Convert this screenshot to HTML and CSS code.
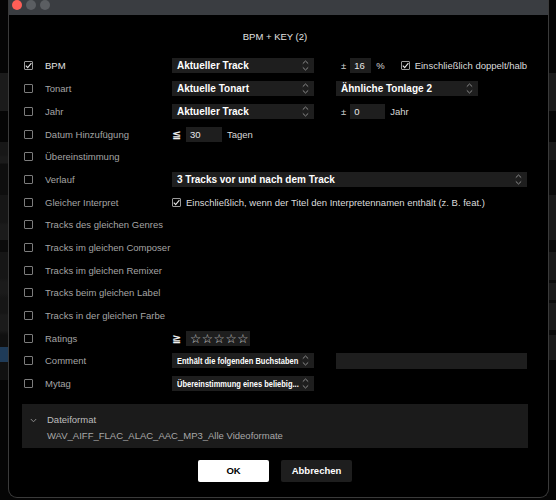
FILE: index.html
```html
<!DOCTYPE html>
<html lang="de">
<head>
    <meta charset="UTF-8">
    <meta name="viewport" content="width=device-width, initial-scale=1.0">
    <title>BPM + KEY (2)</title>
    <link rel="stylesheet" href="styles.css">
</head>
<body>
    <svg class="defs" width="0" height="0">
        <symbol id="updown" viewBox="0 0 7 11">
            <path d="M0.8 3.6 L3.5 1 L6.2 3.6 M0.8 7.4 L3.5 10 L6.2 7.4" fill="none" stroke="#8d8d8d" stroke-width="1"/>
        </symbol>
        <symbol id="tick" viewBox="0 0 9 9">
            <path d="M1.8 4.6 L3.7 6.6 L7.4 2.2" fill="none" stroke="#e6e6e6" stroke-width="1.1"/>
        </symbol>
    </svg>

    <div class="side side-left"></div>

    <div class="window">
        <div class="titlebar">
            <span class="light red"></span>
            <span class="light"></span>
            <span class="light"></span>
        </div>

        <div class="dialog-title">BPM + KEY (2)</div>

        <div class="rows">
            <div class="row">
                <span class="check on"><svg><use href="#tick"/></svg></span>
                <span class="label active">BPM</span>
                <div class="controls">
                    <div class="select"><span>Aktueller Track</span><svg class="ud"><use href="#updown"/></svg></div>
                    <span class="pm">±</span>
                    <span class="field narrow">16</span>
                    <span class="unit">%</span>
                    <span class="check on inline-check"><svg><use href="#tick"/></svg></span>
                    <span class="opt">Einschließlich doppelt/halb</span>
                </div>
            </div>
            <div class="row">
                <span class="check"></span>
                <span class="label">Tonart</span>
                <div class="controls">
                    <div class="select"><span>Aktuelle Tonart</span><svg class="ud"><use href="#updown"/></svg></div>
                    <div class="select"><span>Ähnliche Tonlage 2</span><svg class="ud"><use href="#updown"/></svg></div>
                </div>
            </div>
            <div class="row">
                <span class="check"></span>
                <span class="label">Jahr</span>
                <div class="controls">
                    <div class="select"><span>Aktueller Track</span><svg class="ud"><use href="#updown"/></svg></div>
                    <span class="pm">±</span>
                    <span class="field wide">0</span>
                    <span class="unit">Jahr</span>
                </div>
            </div>
            <div class="row">
                <span class="check"></span>
                <span class="label">Datum Hinzufügung</span>
                <div class="controls">
                    <span class="cmp">≦</span>
                    <span class="field days">30</span>
                    <span class="unit">Tagen</span>
                </div>
            </div>
            <div class="row">
                <span class="check"></span>
                <span class="label">Übereinstimmung</span>
            </div>
            <div class="row">
                <span class="check"></span>
                <span class="label">Verlauf</span>
                <div class="controls">
                    <div class="select full"><span>3 Tracks vor und nach dem Track</span><svg class="ud"><use href="#updown"/></svg></div>
                </div>
            </div>
            <div class="row">
                <span class="check"></span>
                <span class="label">Gleicher Interpret</span>
                <div class="controls">
                    <span class="check on"><svg><use href="#tick"/></svg></span>
                    <span class="opt">Einschließlich, wenn der Titel den Interpretennamen enthält (z. B. feat.)</span>
                </div>
            </div>
            <div class="row">
                <span class="check"></span>
                <span class="label">Tracks des gleichen Genres</span>
            </div>
            <div class="row">
                <span class="check"></span>
                <span class="label">Tracks im gleichen Composer</span>
            </div>
            <div class="row">
                <span class="check"></span>
                <span class="label">Tracks im gleichen Remixer</span>
            </div>
            <div class="row">
                <span class="check"></span>
                <span class="label">Tracks beim gleichen Label</span>
            </div>
            <div class="row">
                <span class="check"></span>
                <span class="label">Tracks in der gleichen Farbe</span>
            </div>
            <div class="row">
                <span class="check"></span>
                <span class="label">Ratings</span>
                <div class="controls">
                    <span class="cmp">≧</span>
                    <span class="stars">☆☆☆☆☆</span>
                </div>
            </div>
            <div class="row">
                <span class="check"></span>
                <span class="label">Comment</span>
                <div class="controls">
                    <div class="select"><span class="squeeze">Enthält die folgenden Buchstaben</span><svg class="ud"><use href="#updown"/></svg></div>
                    <span class="text-input"></span>
                </div>
            </div>
            <div class="row">
                <span class="check"></span>
                <span class="label">Mytag</span>
                <div class="controls">
                    <div class="select"><span class="squeeze">Übereinstimmung eines beliebig...</span><svg class="ud"><use href="#updown"/></svg></div>
                </div>
            </div>
        </div>

        <div class="format-panel">
            <svg class="fold" viewBox="0 0 7 5"><path d="M0.8 1 L3.5 3.8 L6.2 1" fill="none" stroke="#8a8a8a" stroke-width="1"/></svg>
            <span class="format-title">Dateiformat</span>
            <span></span>
            <span class="format-list">WAV_AIFF_FLAC_ALAC_AAC_MP3_Alle Videoformate</span>
        </div>

        <div class="buttons">
            <button class="btn primary">OK</button>
            <button class="btn">Abbrechen</button>
        </div>
    </div>

    <div class="side side-right"></div>
</body>
</html>
```

FILE: styles.css
```css
* {
    box-sizing: border-box;
}
html, body {
    margin: 0;
    height: 100%;
}
body {
    display: flex;
    overflow: hidden;
    background: #050505;
    font-family: "Liberation Sans", Arial, sans-serif;
    font-size: 9.5px;
    color: #a5a5a5;
}
.defs {
    position: absolute;
    width: 0;
    height: 0;
}

/* app behind the dialog */
.side {
    flex: none;
    width: 8px;
    background: linear-gradient(180deg,
        #050505 0 73px, #1b1b1b 73px 111px, #050505 111px 142px,
        #171717 142px 155px, #1b1b1b 157px 163px, #0e0e0e 164px 195px,
        #161616 195px 222px, #1b1b1b 225px 240px, #0b0b0b 240px 252px,
        #161616 252px 278px, #1b1b1b 282px 293px, #161616 298px 313px,
        #1b1b1b 315px 330px, #101010 335px 347px, #1f3b58 347px 362px,
        #111 362px 380px, #050505 380px);
}
.side-right {
    width: 7px;
    background: linear-gradient(180deg,
        #050505 0 73px, #1a1a1a 73px 111px, #050505 111px 142px,
        #1a1a1a 142px 160px, #0b0b0b 160px 195px, #1a1a1a 195px 240px,
        #0b0b0b 240px 252px, #1a1a1a 252px 280px, #0b0b0b 280px 283px,
        #1a1a1a 283px 300px, #0b0b0b 300px 303px, #1a1a1a 303px 330px,
        #0b0b0b 330px 335px, #1a1a1a 335px 360px, #050505 360px);
}

/* dialog window */
.window {
    flex: none;
    width: 541px;
    height: 498px;
    display: flex;
    flex-direction: column;
    background: #000;
    border: 1px solid #3a3a3a;
    border-top: none;
    border-radius: 0 0 9px 9px;
}
.titlebar {
    height: 15px;
    display: flex;
    gap: 4px;
    padding-left: 3px;
    background: #3a3d41;
}
.light {
    width: 10px;
    height: 10px;
    border-radius: 50%;
    background: #5b5e62;
}
.light.red {
    background: #fe5f57;
}
.dialog-title {
    padding: 15px 7px 10.65px 0;
    line-height: 14px;
    text-align: center;
    color: #e2e2e2;
}

/* filter rows */
.row {
    height: 22.7px;
    display: flex;
    align-items: center;
    padding-left: 15px;
}
.check {
    flex: none;
    width: 9px;
    height: 9px;
    border: 1px solid #7c7c7c;
    border-radius: 1px;
    margin-right: 12px;
}
.check svg {
    display: block;
    width: 9px;
    height: 9px;
    margin: -1px;
}
.check.on {
    border-color: #9a9a9a;
}
.label {
    width: 127px;
    flex: none;
    white-space: nowrap;
}
.label.active {
    color: #e4e4e4;
}
.controls {
    display: flex;
    align-items: center;
    white-space: nowrap;
}
.controls .check {
    margin-right: 5px;
}
.select {
    width: 142px;
    height: 15px;
    margin-right: 22px;
    display: flex;
    align-items: center;
    justify-content: space-between;
    padding: 0 5px;
    background: #1e1e1e;
    color: #fff;
    font-weight: bold;
    font-size: 10px;
    overflow: hidden;
}
.select.full {
    width: 355px;
}
.ud {
    flex: none;
    width: 7px;
    height: 11px;
}
.squeeze {
    display: inline-block;
    font-size: 9.5px;
    transform: scaleX(0.79);
    transform-origin: left center;
    width: 114px;
}
.pm {
    margin-left: 5px;
    color: #d0d0d0;
}
.field {
    height: 15px;
    line-height: 15px;
    margin-left: 4px;
    padding-left: 4px;
    background: #1e1e1e;
    color: #e8e8e8;
}
.field.narrow {
    width: 21px;
}
.field.wide {
    width: 35px;
}
.field.days {
    width: 36px;
    margin-left: 5px;
}
.unit {
    margin-left: 5px;
    color: #d8d8d8;
}
.inline-check {
    margin-left: 16px;
}
.opt {
    color: #dcdcdc;
}
.cmp {
    width: 9px;
    font-family: "DejaVu Sans", sans-serif;
    font-weight: bold;
    font-size: 11px;
    color: #f0f0f0;
}
.stars {
    width: 64px;
    height: 15px;
    margin-left: 5px;
    padding-left: 4px;
    line-height: 15px;
    background: #1e1e1e;
    font-family: "DejaVu Sans", sans-serif;
    font-size: 12.5px;
    letter-spacing: 0.6px;
    color: #d4d4d4;
    overflow: hidden;
}
.text-input {
    width: 191px;
    height: 16px;
    background: #1e1e1e;
}

/* file format summary */
.format-panel {
    width: 506px;
    margin: 9px 0 0 13px;
    padding: 8px 0 4px;
    display: grid;
    grid-template-columns: 25px 1fr;
    line-height: 16px;
    background: #1b1b1b;
}
.fold {
    width: 7px;
    height: 5px;
    margin: 6px 0 0 8px;
}
.format-title {
    color: #bdbdbd;
}
.format-list {
    color: #a8a8a8;
}

.buttons {
    display: flex;
    justify-content: center;
    gap: 12px;
    margin-top: 12px;
    padding-right: 7px;
}
.btn {
    width: 71px;
    height: 22px;
    border: none;
    border-radius: 2px;
    background: #1e1e1e;
    color: #fff;
    font-family: "Liberation Sans", Arial, sans-serif;
    font-weight: bold;
    font-size: 9.5px;
}
.btn.primary {
    background: #fff;
    color: #000;
}
```
